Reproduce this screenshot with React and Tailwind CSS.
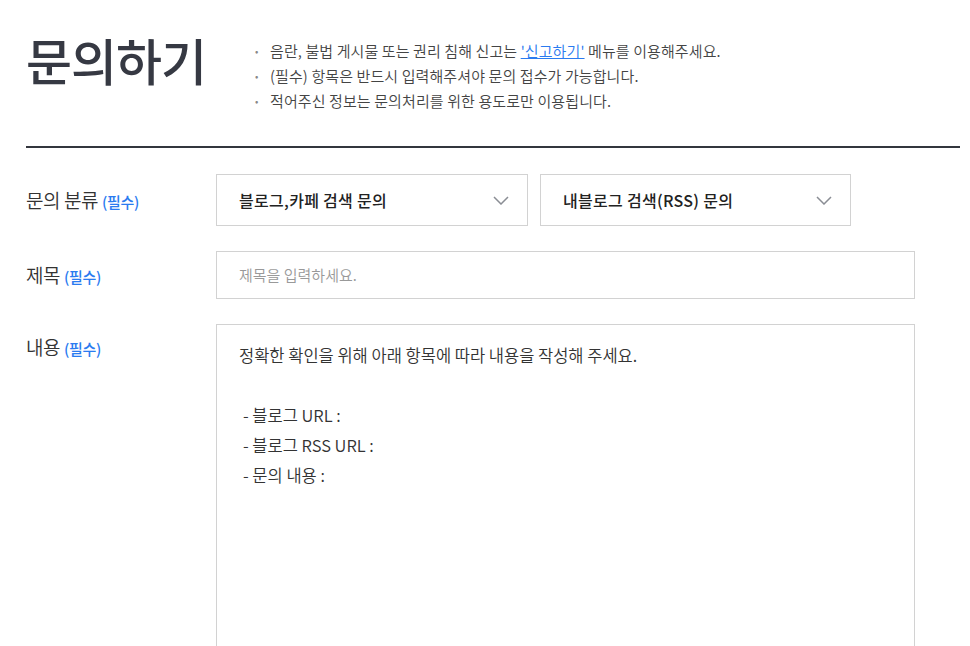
import React from "react";

const font = { fontFamily: '"Noto Sans CJK KR", "Noto Sans", sans-serif' };

function Chevron() {
  return (
    <svg width="16" height="9" viewBox="0 0 16 9" fill="none" className="shrink-0">
      <path d="M1 1L8 8L15 1" stroke="#8a8d94" strokeWidth="1.5" />
    </svg>
  );
}

function Label({ children }) {
  return (
    <div className="w-[190px] shrink-0 text-[19px] font-[350] text-[#333] tracking-[-0.4px]">
      {children} <span className="text-[15px] font-medium text-[#2a7bf0] tracking-[-0.3px]">(필수)</span>
    </div>
  );
}

export default function App() {
  return (
    <div className="w-[970px] h-[646px] overflow-hidden bg-white" style={font}>
      <div className="pl-[26px] pr-[10px]">
        <div className="flex items-start pt-[26px] h-[146px]">
          <h1 className="w-[229px] shrink-0 text-[50px] leading-[66px] font-medium text-[#363943] tracking-[-1px]">
            문의하기
          </h1>
          <ul className="pt-[12px] text-[15px] font-[350] leading-[25px] text-[#444] tracking-[0.1px]">
            <li className="flex items-center">
              <span className="w-[15px] text-[#888] text-[10px]">•</span>
              <span>
                음란, 불법 게시물 또는 권리 침해 신고는{" "}
                <span className="text-[#2a7bf0] underline">'신고하기'</span> 메뉴를 이용해주세요.
              </span>
            </li>
            <li className="flex items-center">
              <span className="w-[15px] text-[#888] text-[10px]">•</span>
              <span>(필수) 항목은 반드시 입력해주셔야 문의 접수가 가능합니다.</span>
            </li>
            <li className="flex items-center">
              <span className="w-[15px] text-[#888] text-[10px]">•</span>
              <span>적어주신 정보는 문의처리를 위한 용도로만 이용됩니다.</span>
            </li>
          </ul>
        </div>
        <div className="h-[2px] bg-[#33363d]" />
        <div className="pt-[26px] flex flex-col gap-[25px]">
          <div className="flex items-center">
            <Label>문의 분류</Label>
            <div className="flex gap-[12px]">
              <div className="w-[312px] h-[52px] border border-[#d2d2d2] flex items-center justify-between pl-[22px] pr-[18px]">
                <span className="text-[16px] font-medium text-[#222] tracking-[0.3px]">블로그,카페 검색 문의</span>
                <Chevron />
              </div>
              <div className="w-[311px] h-[52px] border border-[#d2d2d2] flex items-center justify-between pl-[22px] pr-[18px]">
                <span className="text-[16px] font-medium text-[#222] tracking-[0.3px]">내블로그 검색(RSS) 문의</span>
                <Chevron />
              </div>
            </div>
          </div>
          <div className="flex items-center">
            <Label>제목</Label>
            <div className="w-[699px] h-[48px] border border-[#d2d2d2] flex items-center pl-[22px]">
              <span className="text-[15px] font-[350] text-[#999]">제목을 입력하세요.</span>
            </div>
          </div>
          <div className="flex items-start">
            <div className="pt-[9px]">
              <Label>내용</Label>
            </div>
            <div className="w-[699px] h-[400px] border border-[#d2d2d2] pl-[22px] pt-[15px] text-[16.5px] font-[350] leading-[30px] text-[#333]">
              <div>정확한 확인을 위해 아래 항목에 따라 내용을 작성해 주세요.</div>
              <div>&nbsp;</div>
              <div className="pl-[4px]">- 블로그 URL :</div>
              <div className="pl-[4px]">- 블로그 RSS URL :</div>
              <div className="pl-[4px]">- 문의 내용 :</div>
            </div>
          </div>
        </div>
      </div>
    </div>
  );
}
